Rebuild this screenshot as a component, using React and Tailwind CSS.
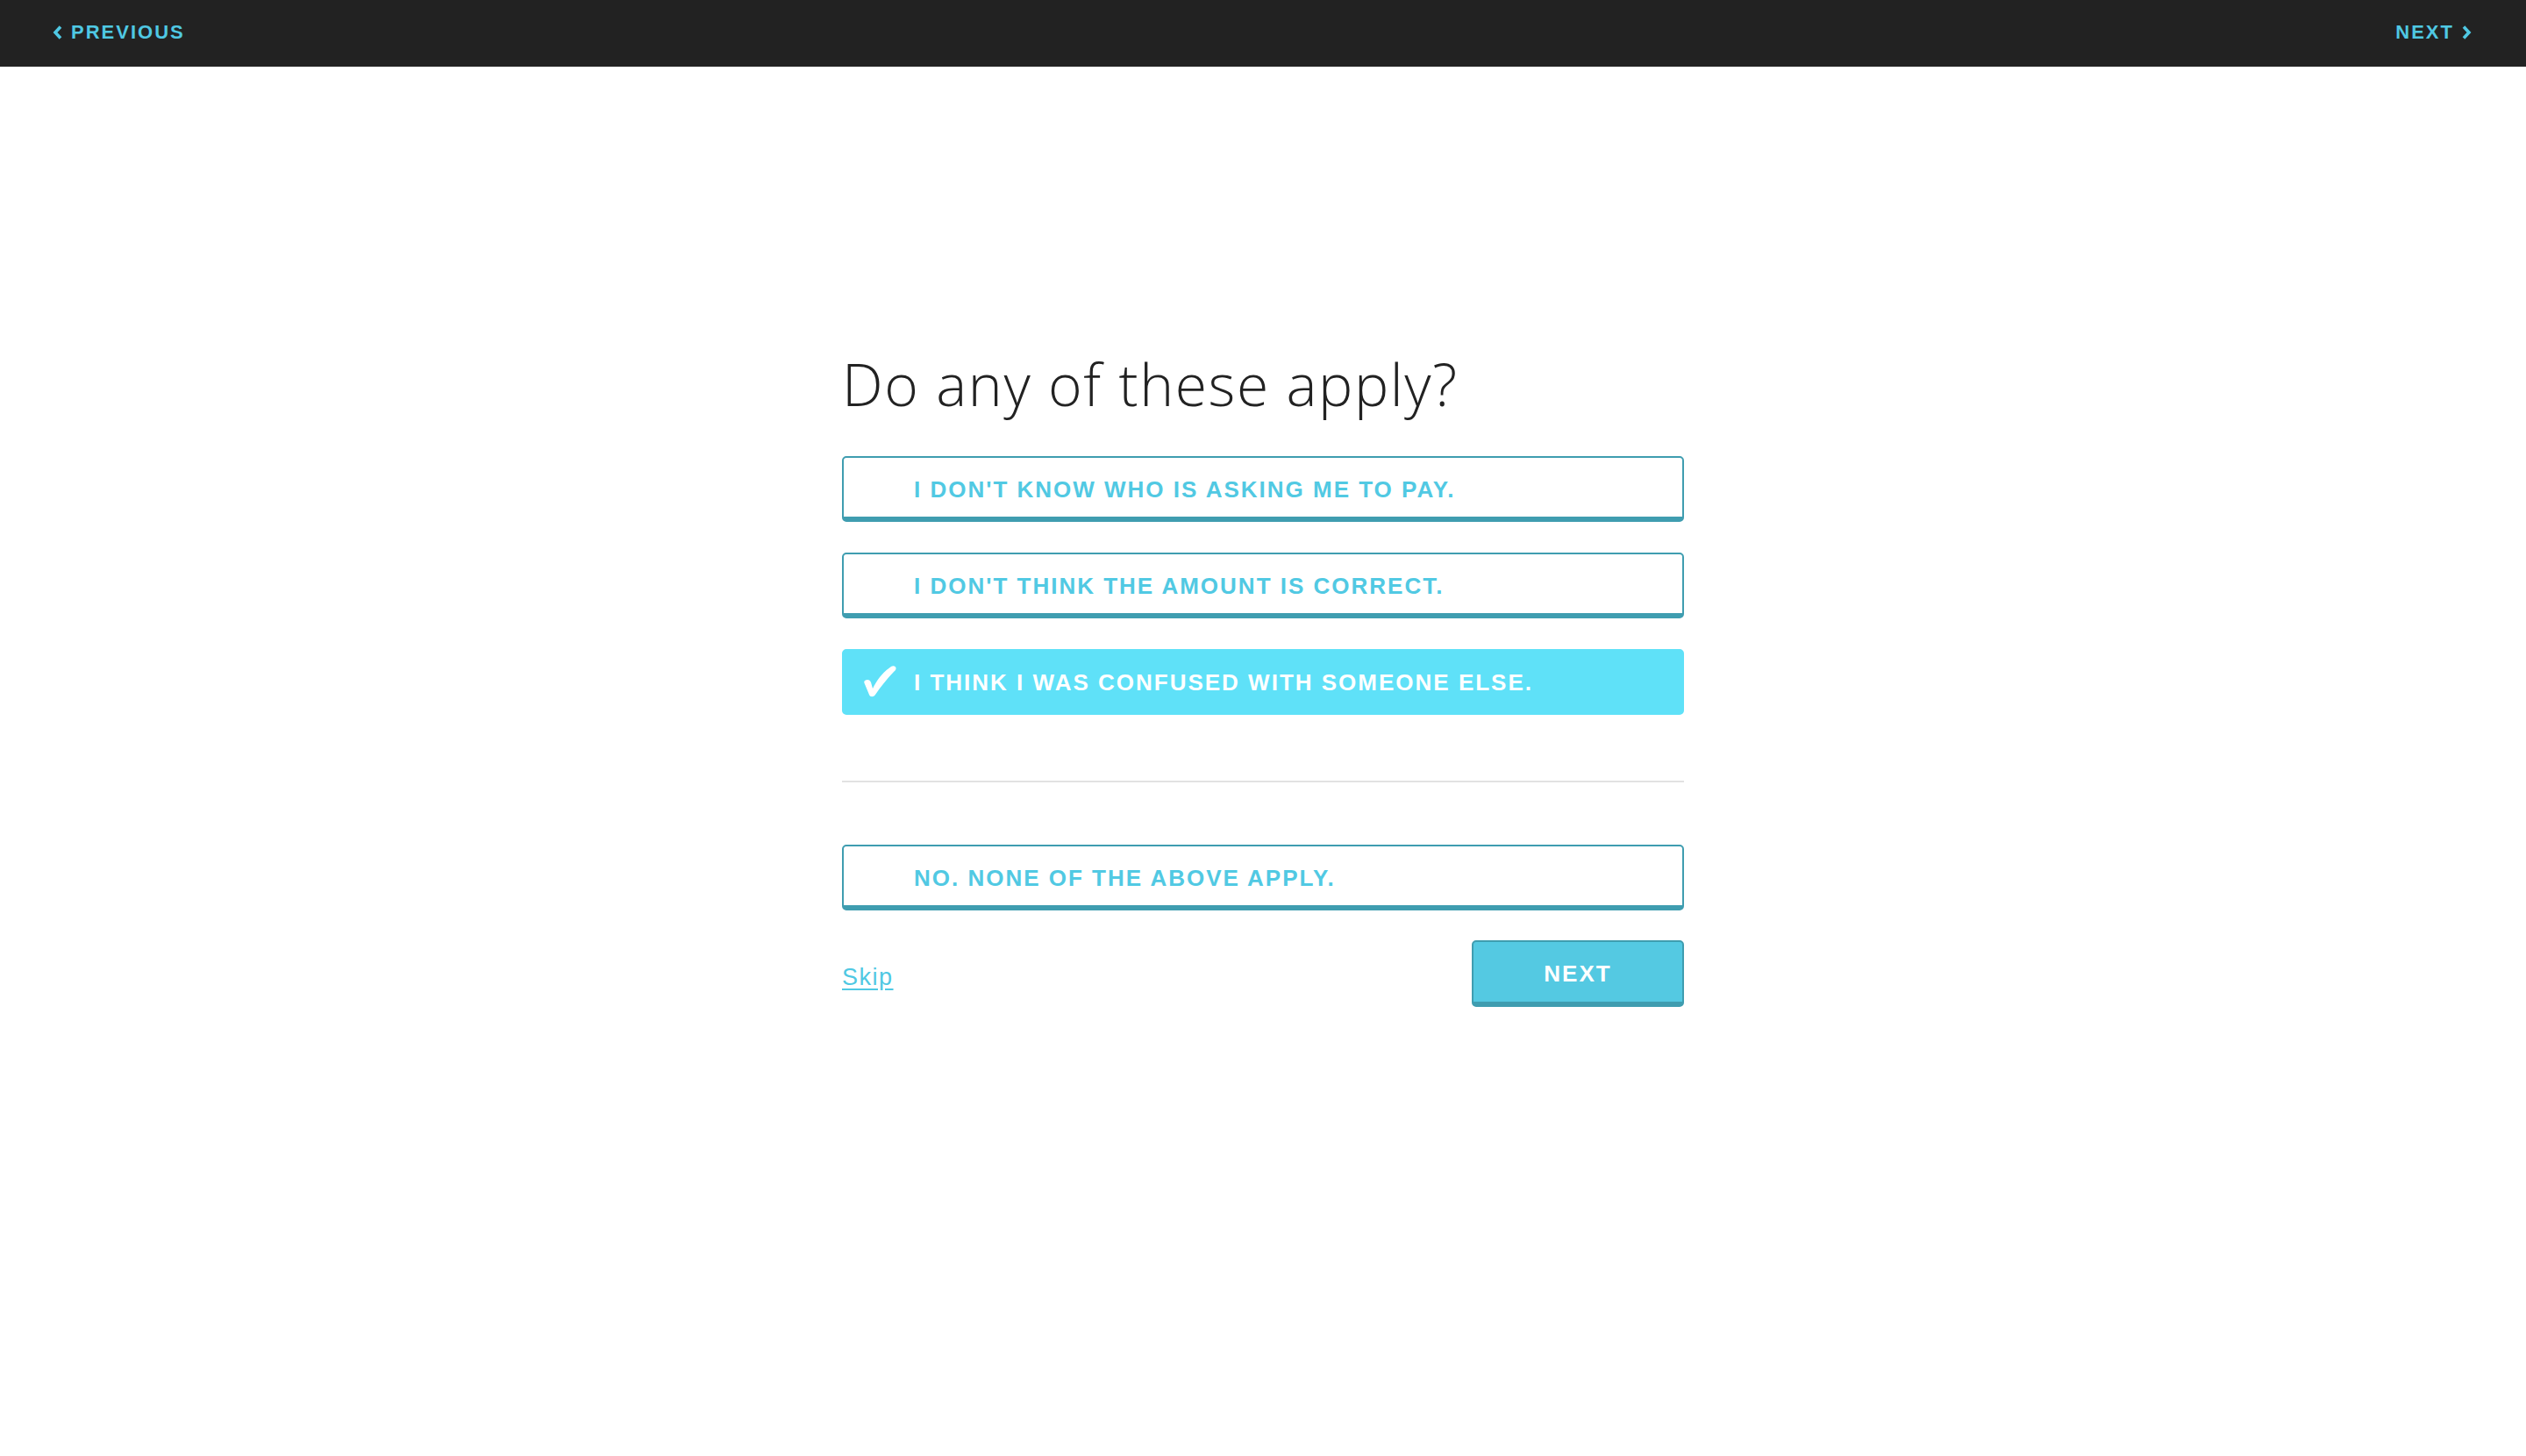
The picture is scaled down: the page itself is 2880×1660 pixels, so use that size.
import React, { useState } from "react";

const options = [
  "I don't know who is asking me to pay.",
  "I don't think the amount is correct.",
  "I think I was confused with someone else.",
];

const Check = () => (
  <svg width="40" height="37" viewBox="0 0 40 37" className="fill-white">
    <path d="M3 18 C6 16 9 17 10 20 L12 27 C17 17 24 8 33 2 C36 0 40 2 38 6 C30 14 22 24 15 34 C13 37 9 37 8 34 L3 22 C2 20 2 19 3 18 Z" />
  </svg>
);

const Option = ({ label, selected, onClick }) => (
  <button
    onClick={onClick}
    className={`relative w-full h-[75px] flex items-center pt-[6px] pl-[80px] rounded-[5px] border-2 border-b-[6px] text-left uppercase font-bold text-[26px] tracking-[2px] ${
      selected
        ? "bg-[#5fe1f8] border-[#5fe1f8] text-white"
        : "bg-white border-[#3f9db0] text-[#51c9e3]"
    }`}
  >
    {selected && (
      <span className="absolute left-[21px] top-[16px]">
        <Check />
      </span>
    )}
    {label}
  </button>
);

export default function App() {
  const [picked, setPicked] = useState(2);

  return (
    <div className="min-h-screen bg-white font-['Liberation_Sans',Arial,sans-serif]">
      {/* Top bar */}
      <header className="h-[76px] pb-[3px] bg-[#222222] flex items-center justify-between pl-[60px] pr-[62px] text-[#4fc8e3] font-bold text-[22px] tracking-[2px] uppercase">
        <a href="#" className="flex items-center gap-[10px]">
          <svg width="11" height="16" viewBox="0 0 11 16">
            <polyline points="9,1.5 3,8 9,14.5" fill="none" stroke="#4fc8e3" strokeWidth="3.6" />
          </svg>
          <span>Previous</span>
        </a>
        <a href="#" className="flex items-center gap-[9px]">
          <span>Next</span>
          <svg width="11" height="16" viewBox="0 0 11 16">
            <polyline points="2,1.5 8,8 2,14.5" fill="none" stroke="#4fc8e3" strokeWidth="3.6" />
          </svg>
        </a>
      </header>

      <main className="w-[960px] mx-auto pt-[328px]">
        <h1 className="font-['Open_Sans',sans-serif] font-light text-[66px] leading-none tracking-[1.6px] text-[#222222]">
          Do any of these apply?
        </h1>

        <div className="mt-[50px] flex flex-col gap-[35px]">
          {options.map((o, i) => (
            <Option key={o} label={o} selected={picked === i} onClick={() => setPicked(i)} />
          ))}
        </div>

        <div className="mt-[75px] h-[2px] bg-[#e2e2e2]"></div>

        <div className="mt-[71px]">
          <Option label="No. None of the above apply." selected={picked === 3} onClick={() => setPicked(3)} />
        </div>

        <div className="mt-[34px] flex items-center justify-between">
          <a href="#" className="pt-[8px] text-[27px] tracking-[1.5px] text-[#4fc8e3] underline underline-offset-[4px]">
            Skip
          </a>
          <button className="w-[242px] h-[76px] pt-[4px] rounded-[5px] bg-[#54c9e2] border-2 border-b-[6px] border-[#3f9db0] text-white font-bold uppercase text-[26px] tracking-[2px]">
            Next
          </button>
        </div>
      </main>
    </div>
  );
}
